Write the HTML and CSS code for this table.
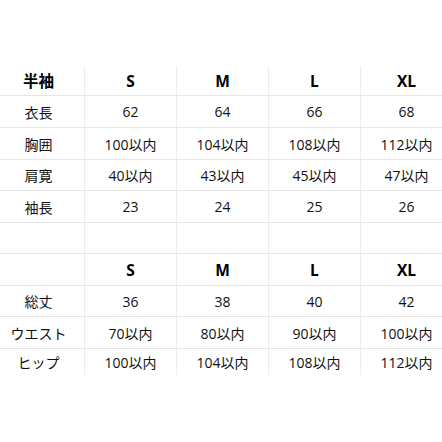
FILE: index.html
```html
<!DOCTYPE html>
<html lang="ja">
<head>
<meta charset="utf-8">
<link rel="stylesheet" href="styles.css">
</head>
<body>
<div class="sheet">
  <div class="grid">
    <div class="c h">半袖</div><div class="c h">S</div><div class="c h">M</div><div class="c h">L</div><div class="c h last">XL</div>
    <div class="c">衣長</div><div class="c">62</div><div class="c">64</div><div class="c">66</div><div class="c last">68</div>
    <div class="c">胸囲</div><div class="c">100以内</div><div class="c">104以内</div><div class="c">108以内</div><div class="c last">112以内</div>
    <div class="c">肩寛</div><div class="c">40以内</div><div class="c">43以内</div><div class="c">45以内</div><div class="c last">47以内</div>
    <div class="c">袖長</div><div class="c">23</div><div class="c">24</div><div class="c">25</div><div class="c last">26</div>
    <div class="c"></div><div class="c"></div><div class="c"></div><div class="c"></div><div class="c last"></div>
    <div class="c h"></div><div class="c h">S</div><div class="c h">M</div><div class="c h">L</div><div class="c h last">XL</div>
    <div class="c">総丈</div><div class="c">36</div><div class="c">38</div><div class="c">40</div><div class="c last">42</div>
    <div class="c">ウエスト</div><div class="c">70以内</div><div class="c">80以内</div><div class="c">90以内</div><div class="c last">100以内</div>
    <div class="c nb">ヒップ</div><div class="c nb">100以内</div><div class="c nb">104以内</div><div class="c nb">108以内</div><div class="c nb last">112以内</div>
  </div>
</div>
</body>
</html>
```

FILE: styles.css
```css
html, body {
  margin: 0;
  padding: 0;
  background: #ffffff;
}
.sheet {
  width: 442px;
  height: 442px;
  overflow: hidden;
  padding-top: 66px;
  box-sizing: border-box;
}
.grid {
  margin-left: -7px;
  width: 460px;
  display: grid;
  grid-template-columns: repeat(5, 92px);
  grid-template-rows: 30px 32px 32px 31px 32px 31px 32px 31px 32px 26px;
  font-family: "Open Sans", "Noto Sans CJK JP", sans-serif;
  font-size: 14px;
  color: #111111;
}
.c {
  display: flex;
  align-items: center;
  justify-content: center;
  border-right: 1px solid #ececec;
  border-bottom: 1px solid #e6e6e6;
  box-sizing: border-box;
  white-space: nowrap;
}
.c.last {
  border-right: 1px solid #f4f4f4;
}
.c.nb {
  border-bottom: none;
}
.h {
  font-weight: 700;
  font-size: 15.5px;
  color: #000;
}
```
